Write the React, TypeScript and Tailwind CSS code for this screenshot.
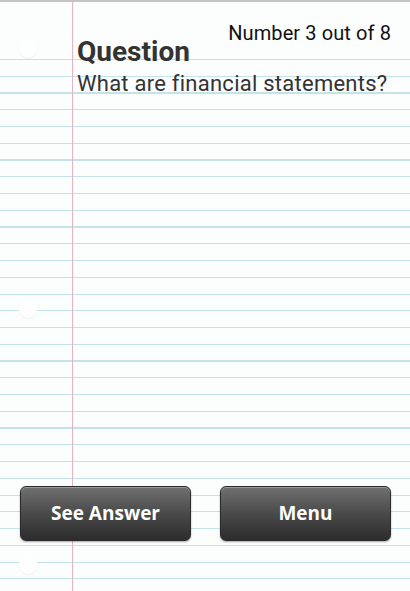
const Hole = ({ top }: { top: string }) => (
  <div
    className={`absolute left-[19px] ${top} h-[18px] w-[18px] rounded-full bg-[#fefefe] shadow-[0_1px_1px_rgba(0,0,0,0.05)]`}
  />
);

const Button = ({ label }: { label: string }) => (
  <button className="flex h-[55px] w-[171px] items-center justify-center rounded-[6px] border border-[#2b2b2b] bg-gradient-to-b from-[#707070] via-[#4a4a4a] to-[#2c2c2c] font-['Open_Sans',sans-serif] text-[19px] font-bold text-white shadow-[inset_0_1px_0_#9a9a9a,0_1px_2px_rgba(0,0,0,0.35)]">
    {label}
  </button>
);

export default function App() {
  return (
    <div className="relative flex h-[591px] w-[410px] flex-col overflow-hidden border-t-2 border-[#c4c4c4] bg-[#fcfdfd] bg-[repeating-linear-gradient(to_bottom,#c4e2ea_0,#c4e2ea_1px,transparent_1px,transparent_16.75px)] bg-[position:0_57px] bg-no-repeat font-['Roboto',sans-serif]">
      <div className="pointer-events-none absolute inset-y-0 left-[72px] w-px bg-[#eab0c4]" />
      <Hole top="top-[38px]" />
      <Hole top="top-[298px]" />
      <Hole top="top-[554px]" />

      <div className="relative flex justify-end pr-[19px] pt-[19px] text-[20px] leading-[24px] tracking-[0.1px] text-[#111]">
        Number 3 out of 8
      </div>
      <div className="relative -mt-[9px] pl-[77px] text-[28px] font-bold leading-[32px] text-[#333]">
        Question
      </div>
      <div className="relative mt-[3px] pl-[77px] text-[22px] leading-[26px] tracking-[0.25px] text-[#333]">
        What are financial statements?
      </div>

      <div className="relative mt-auto mb-[50px] flex justify-between pl-[20px] pr-[19px]">
        <Button label="See Answer" />
        <Button label="Menu" />
      </div>
    </div>
  );
}
